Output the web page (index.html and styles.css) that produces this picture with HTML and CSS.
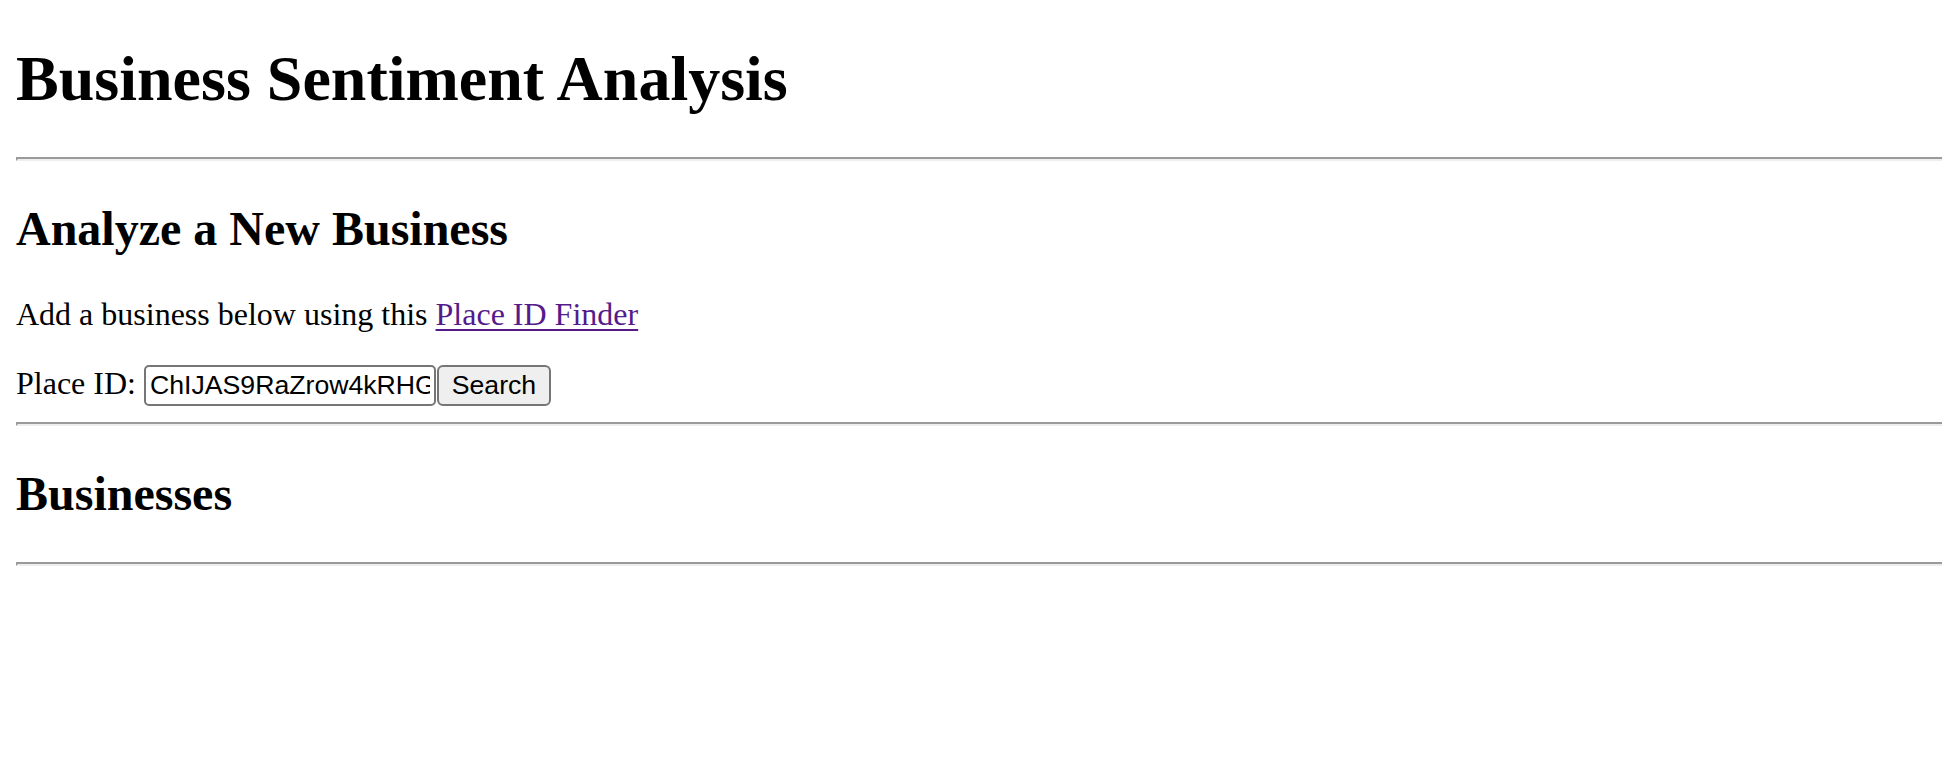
FILE: index.html
```html
<!DOCTYPE html>
<html lang="en">
<head>
<meta charset="utf-8">
<title>Business Sentiment Analysis</title>
<link rel="stylesheet" href="styles.css">
</head>
<body class="page">
  <h1 class="title">Business Sentiment Analysis</h1>
  <hr class="rule">
  <h2 class="section-title">Analyze a New Business</h2>
  <p class="text">Add a business below using this <a class="link" href="#">Place ID Finder</a></p>
  <form class="search-form">Place ID: <input class="field" type="text" value="ChIJAS9RaZrow4kRHGOKY1UWJyM"><button class="btn" type="button">Search</button></form>
  <hr class="rule">
  <h2 class="section-title">Businesses</h2>
  <hr class="rule">
</body>
</html>
```

FILE: styles.css
```css
html, body {
  background: #ffffff;
}

.page {
  margin: 0 0 16px 16px;
  padding: 0;
  font-family: "Liberation Serif", "Times New Roman", serif;
  font-size: 32px;
  line-height: 1.107;
  color: #000000;
}

.title {
  font-size: 64px;
  font-weight: bold;
  line-height: 71px;
  margin: 42.88px 0;
}

.section-title {
  font-size: 48px;
  font-weight: bold;
  line-height: 56px;
  margin: 39.84px 0;
}

.text {
  margin: 32px 0;
  line-height: 37px;
}

.link {
  color: #551a8b;
  text-decoration: underline;
  text-decoration-thickness: 2px;
  text-underline-offset: 4px;
}

.rule {
  margin: 16px 0;
  height: 0;
  border: 0;
  border-top: 2px solid #9a9a9a;
  border-left: 2px solid #9a9a9a;
  border-bottom: 2px solid #eeeeee;
}

.search-form {
  margin: 0;
  line-height: 35px;
}

.field {
  box-sizing: border-box;
  width: 292px;
  height: 41px;
  padding: 2px 4px;
  margin: 0;
  border: 2px solid #767676;
  border-radius: 5px;
  background: #ffffff;
  color: #000000;
  font-family: "Liberation Sans", Arial, sans-serif;
  font-size: 26.67px;
  vertical-align: baseline;
}

.btn {
  box-sizing: border-box;
  width: 114px;
  height: 41px;
  padding: 2px 12px;
  margin: 0 0 0 1px;
  border: 2px solid #767676;
  border-radius: 6px;
  background: #efefef;
  color: #000000;
  font-family: "Liberation Sans", Arial, sans-serif;
  font-size: 26.67px;
  vertical-align: baseline;
}
```
